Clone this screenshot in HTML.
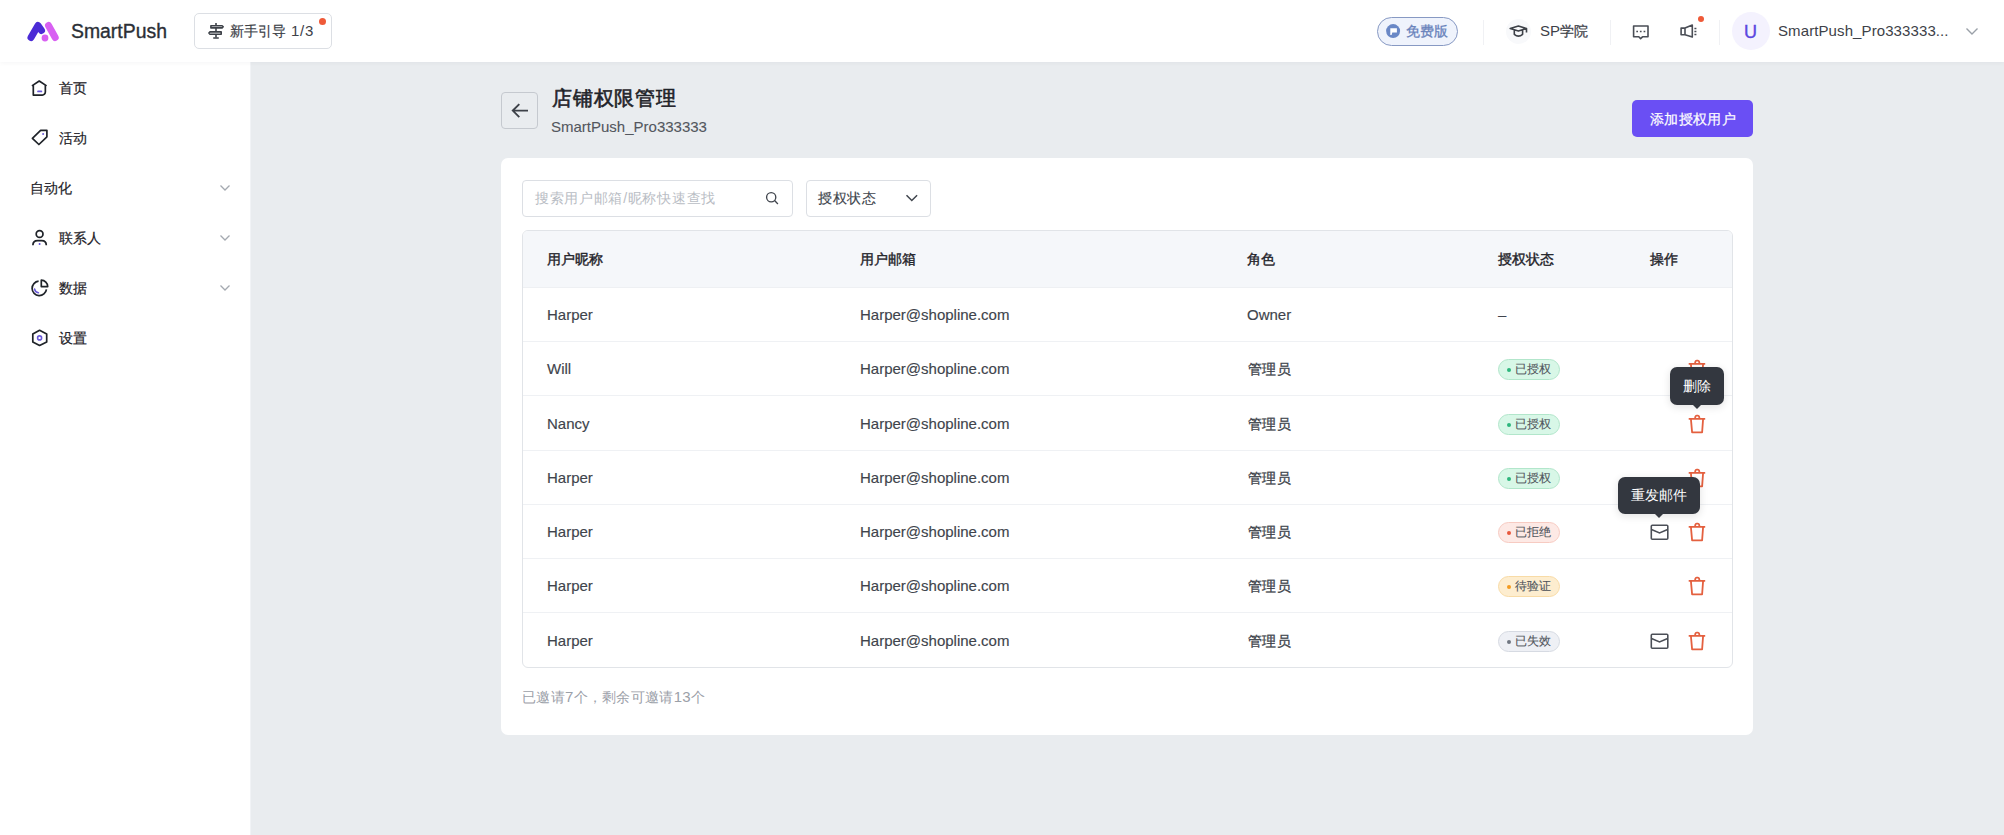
<!DOCTYPE html>
<html><head><meta charset="utf-8">
<style>
*{box-sizing:border-box;margin:0;padding:0}
html,body{width:2004px;height:835px;overflow:hidden}
body{font-family:"Liberation Sans",sans-serif;background:#e9ecef;color:#1f2329;position:relative}
.a{position:absolute;white-space:nowrap}
#hdr{left:0;top:0;width:2004px;height:62px;background:#fff;box-shadow:0 1px 5px rgba(20,30,50,0.045);z-index:2}
#side{left:0;top:62px;width:251px;height:773px;background:#fff;border-right:1px solid #f1f3f6}
.mt{font-size:14px;line-height:20px;color:#1f2329;-webkit-text-stroke:0.2px #1f2329}
.chev{width:12px;height:12px}
#card{left:501px;top:158px;width:1252px;height:577px;background:#fff;border-radius:7px}
#tbl{left:522px;top:230px;width:1211px;height:438px;border:1px solid #e1e4e8;border-radius:6px;overflow:hidden;background:#fff}
.th{position:absolute;top:0;left:0;width:100%;height:57px;background:#f5f7fa;border-bottom:1px solid #eef0f3}
.row{position:absolute;left:0;width:100%;height:54px;border-bottom:1px solid #eff1f4}
.c{position:absolute;white-space:nowrap;font-size:15px;line-height:20px;color:#40444c;-webkit-text-stroke:0.15px #40444c;top:17px}
.hc{position:absolute;white-space:nowrap;font-size:14px;line-height:20px;color:#1f2329;font-weight:400;-webkit-text-stroke:0.38px #1f2329;top:18px}
.cj{font-size:14px;-webkit-text-stroke:0.3px #3a3f47;margin-left:0.5px;letter-spacing:0.5px}
.badge{position:absolute;left:975px;top:17px;width:62px;height:21px;border-radius:11px;border:1px solid;font-size:12px;line-height:19px;padding-left:16px;color:#50555c;-webkit-text-stroke:0.1px #50555c;letter-spacing:0.2px}
.badge i{position:absolute;left:7.5px;top:8px;width:4px;height:4px;border-radius:50%}
.g{background:#d8f7e7;border-color:#b2e6cb}.g i{background:#2eb67d}
.r{background:#fde9e5;border-color:#f7cbc2}.r i{background:#e8583d}
.o{background:#fdedcf;border-color:#f8dba6}.o i{background:#f49a1e}
.x{background:#eef0f5;border-color:#d6dae2}.x i{background:#6f7681}
.ic{position:absolute}
.tip{position:absolute;background:#33373f;color:#fff;border-radius:7px;font-size:14px;line-height:20px;text-align:center;box-shadow:0 2px 8px rgba(0,0,0,0.12)}
.tip:after{content:"";position:absolute;left:50%;bottom:-4px;margin-left:-5px;border-left:5px solid transparent;border-right:5px solid transparent;border-top:5px solid #33373f}
</style></head>
<body>
<div id="hdr" class="a">
  <!-- logo -->
  <svg class="ic" style="left:24px;top:18px" width="40" height="28" viewBox="0 0 40 28">
    <path d="M7 19.5 L14 7.5 L17.5 12.5" fill="none" stroke="#4b2bd6" stroke-width="7" stroke-linecap="round" stroke-linejoin="round"/>
    <path d="M24.5 7.5 L31.2 19.5" fill="none" stroke="#d860f2" stroke-width="7" stroke-linecap="round"/>
    <circle cx="21" cy="20" r="3.4" fill="#d860f2"/>
  </svg>
  <div class="a" style="left:71px;top:19px;font-size:19.4px;line-height:24px;color:#2b2f36;-webkit-text-stroke:0.35px #2b2f36">SmartPush</div>
  <!-- guide -->
  <div class="a" style="left:194px;top:13px;width:138px;height:36px;border:1px solid #dcdfe4;border-radius:5px"></div>
  <svg class="ic" style="left:207px;top:22px" width="18" height="18" viewBox="0 0 18 18">
    <path d="M9 1v2.7M3.9 3.7h11.2l1.1 1.1-1.1 1.1H3.9zM14.2 9.9H3l-1.1 1.15L3 12.2h11.2zM9 5.9v4M9 12.2v3.2" fill="none" stroke="#3d4148" stroke-width="1.6" stroke-linejoin="round"/><path d="M6.8 16h4.4" stroke="#3d4148" stroke-width="1.6" stroke-linecap="round"/>
  </svg>
  <div class="a" style="left:230px;top:21px;font-size:14px;line-height:20px;color:#3d4148;-webkit-text-stroke:0.2px #3d4148">新手引导<span style="font-size:15px;letter-spacing:0.8px;-webkit-text-stroke:0"> 1/3</span></div>
  <div class="a" style="left:319px;top:18px;width:7px;height:7px;border-radius:50%;background:#ef5a38"></div>

  <!-- free badge -->
  <div class="a" style="left:1377px;top:17px;width:81px;height:29px;border:1px solid #8799c3;border-radius:15px;background:#eff3fc"></div>
  <svg class="ic" style="left:1386px;top:24px" width="15" height="15" viewBox="0 0 15 15"><circle cx="7.1" cy="7.1" r="7" fill="#6a88c6"/><path d="M4.3 4.3H10.9V8.5H6.3L5.6 10.9H4.3Z" fill="#fff"/></svg>
  <div class="a" style="left:1406px;top:21px;font-size:14px;line-height:20px;color:#6882bb;-webkit-text-stroke:0.3px #6882bb">免费版</div>
  <div class="a" style="left:1483px;top:20px;width:1px;height:25px;background:#f0f1f4"></div>
  <div class="a" style="left:1506px;top:19px;width:25px;height:25px;border-radius:50%;background:#f8f9fb"></div>
  <svg class="ic" style="left:1508px;top:23px" width="21" height="17" viewBox="0 0 21 17"><path d="M2.2 5.5L10.4 3L18.5 5.5L10.4 8.1Z M18.5 5.5V9.6 M6.3 7.1V11.3C8.8 13.5 12.1 13.5 14.6 11.3V7.1" fill="none" stroke="#3d4148" stroke-width="1.6" stroke-linejoin="round"/></svg>
  <div class="a" style="left:1540px;top:21px;font-size:15px;line-height:20px;color:#3d4148">SP<span style="font-size:14px;-webkit-text-stroke:0.25px #3d4148">学院</span></div>
  <div class="a" style="left:1610px;top:20px;width:1px;height:25px;background:#f0f1f4"></div>
  <svg class="ic" style="left:1632px;top:24px" width="18" height="16" viewBox="0 0 18 16"><path d="M1.6 2H16V12.8H10.5L8.6 14.6L6.8 12.8H1.6Z" fill="none" stroke="#4a4e56" stroke-width="1.6" stroke-linejoin="round"/><path d="M4.3 7.45h1.7M7.9 7.45h1.7M11.6 7.45h1.7" stroke="#4a4e56" stroke-width="1.6"/></svg>
  <svg class="ic" style="left:1679px;top:23px" width="20" height="17" viewBox="0 0 20 17"><path d="M2.1 5.1H6V11.8H2.1Z M6 5.1L13.3 2V14.1L6 11.8" fill="none" stroke="#4a4e56" stroke-width="1.6" stroke-linejoin="round"/><path d="M15.4 5.5h2M15.4 8.5h2M15.4 11.6h2" stroke="#4a4e56" stroke-width="1.5"/></svg>
  <div class="a" style="left:1698px;top:15.6px;width:6.2px;height:6.2px;border-radius:50%;background:#ef5a38"></div>
  <div class="a" style="left:1719px;top:20px;width:1px;height:25px;background:#f0f1f4"></div>
  <div class="a" style="left:1732px;top:12px;width:38px;height:38px;border-radius:50%;background:#f4f2fe"></div>
  <div class="a" style="left:1744px;top:22px;font-size:18px;line-height:20px;color:#5b47e0;-webkit-text-stroke:0.4px #5b47e0">U</div>
  <div class="a" style="left:1778px;top:21px;font-size:15px;line-height:20px;color:#3d4148;letter-spacing:0.1px">SmartPush_Pro333333...</div>
  <svg class="ic" style="left:1965px;top:26px" width="14" height="10" viewBox="0 0 14 10">
    <path d="M1.5 2.5l5.5 5.5 5.5-5.5" fill="none" stroke="#9aa0a8" stroke-width="1.4"/>
  </svg>
</div>

<div id="side" class="a">
  <svg class="ic" style="left:30px;top:17px" width="19" height="19" viewBox="0 0 19 19">
    <path d="M1.9 6.9L9.25 2L16.6 6.9M3.3 5.9V16.05H12.35A3 3 0 0 0 15.35 13.05V5.9" fill="none" stroke="#1f2329" stroke-width="1.7" stroke-linejoin="round"/>
    <path d="M8 12.45H11.4" stroke="#6a5ad8" stroke-width="1.7" stroke-linecap="round"/>
  </svg>
  <div class="a mt" style="left:59px;top:16px">首页</div>
  <svg class="ic" style="left:30px;top:66px" width="19" height="19" viewBox="0 0 19 19">
    <path d="M10.6 2.3H16.9V8.8L8.9 16.5L2.4 10.3Z" fill="none" stroke="#1f2329" stroke-width="1.7" stroke-linejoin="round"/>
    <circle cx="13.1" cy="6.1" r="1" fill="#6a5ad8"/>
  </svg>
  <div class="a mt" style="left:59px;top:66px">活动</div>
  <div class="a mt" style="left:30px;top:116px">自动化</div>
  <svg class="ic chev" style="left:219px;top:120px" viewBox="0 0 12 12"><path d="M1.5 3.5l4.5 4.5 4.5-4.5" fill="none" stroke="#a4a9b0" stroke-width="1.3"/></svg>
  <svg class="ic" style="left:30px;top:166px" width="19" height="19" viewBox="0 0 19 19">
    <circle cx="9.6" cy="6.07" r="3.4" fill="none" stroke="#1f2329" stroke-width="1.7"/>
    <path d="M2.9 17.3C2.9 14.2 4.5 12.6 7.5 12.6H11.7C14.7 12.6 16.3 14.2 16.3 17.3" fill="none" stroke="#1f2329" stroke-width="1.7"/>
    <path d="M9.6 15V17" stroke="#6a5ad8" stroke-width="1.6"/>
  </svg>
  <div class="a mt" style="left:59px;top:166px">联系人</div>
  <svg class="ic chev" style="left:219px;top:170px" viewBox="0 0 12 12"><path d="M1.5 3.5l4.5 4.5 4.5-4.5" fill="none" stroke="#a4a9b0" stroke-width="1.3"/></svg>
  <svg class="ic" style="left:30px;top:216px" width="19" height="19" viewBox="0 0 19 19">
    <path d="M8.6 3.2A7.2 7.2 0 1 0 16.45 11.3" fill="none" stroke="#1f2329" stroke-width="1.7"/>
    <path d="M11.3 8.6V2.2A6.4 6.4 0 0 1 17.7 8.6Z" fill="none" stroke="#1f2329" stroke-width="1.7" stroke-linejoin="round"/>
    <path d="M4.6 11.1A4.7 4.7 0 0 0 8.4 14.8" fill="none" stroke="#6a5ad8" stroke-width="1.6" stroke-linecap="round"/>
  </svg>
  <div class="a mt" style="left:59px;top:216px">数据</div>
  <svg class="ic chev" style="left:219px;top:220px" viewBox="0 0 12 12"><path d="M1.5 3.5l4.5 4.5 4.5-4.5" fill="none" stroke="#a4a9b0" stroke-width="1.3"/></svg>
  <svg class="ic" style="left:30px;top:266px" width="19" height="19" viewBox="0 0 19 19">
    <path d="M9.6 2.3L16.7 6.1V14L9.6 17.5L2.8 14V6.1Z" fill="none" stroke="#1f2329" stroke-width="1.7" stroke-linejoin="round"/>
    <circle cx="9.6" cy="9.9" r="2" fill="none" stroke="#6a5ad8" stroke-width="1.6"/>
  </svg>
  <div class="a mt" style="left:59px;top:266px">设置</div>
</div>

<!-- page header -->
<div class="a" style="left:501px;top:92px;width:37px;height:37px;border:1px solid #c5c9cf;border-radius:4px"></div>
<svg class="ic" style="left:510px;top:101px" width="19" height="19" viewBox="0 0 19 19">
  <path d="M18 9.6H3M9.3 3.1L2.8 9.6 9.3 16.1" fill="none" stroke="#3d4148" stroke-width="1.9"/>
</svg>
<div class="a" style="left:552px;top:86px;font-size:20px;line-height:24px;font-weight:400;-webkit-text-stroke:0.6px #1f2329;letter-spacing:0.8px;color:#1f2329">店铺权限管理</div>
<div class="a" style="left:551px;top:117px;font-size:15px;line-height:20px;color:#53575e;-webkit-text-stroke:0.1px #53575e">SmartPush_Pro333333</div>
<div class="a" style="left:1632px;top:100px;width:121px;height:37px;border-radius:5px;background:#6a4ff4;color:#fff;font-size:14px;line-height:38px;padding-left:1px;letter-spacing:0.4px;text-align:center;-webkit-text-stroke:0.2px #fff">添加授权用户</div>

<div id="card" class="a"></div>
<!-- search -->
<div class="a" style="left:522px;top:180px;width:271px;height:37px;border:1px solid #dcdfe4;border-radius:4px"></div>
<div class="a" style="left:535px;top:188px;font-size:14px;line-height:20px;color:#b9bdc4;letter-spacing:0.7px">搜索用户邮箱/昵称快速查找</div>
<svg class="ic" style="left:764px;top:190px" width="16" height="16" viewBox="0 0 16 16">
  <circle cx="7.2" cy="7.2" r="4.6" fill="none" stroke="#40454d" stroke-width="1.35"/>
  <path d="M10.6 10.6l3.3 3.3" stroke="#40454d" stroke-width="1.35"/>
</svg>
<div class="a" style="left:806px;top:180px;width:125px;height:37px;border:1px solid #dcdfe4;border-radius:4px"></div>
<div class="a" style="left:818px;top:188px;font-size:14px;line-height:20px;color:#40454d;-webkit-text-stroke:0.15px #40454d;letter-spacing:0.5px">授权状态</div>
<svg class="ic" style="left:904px;top:192px" width="15" height="12" viewBox="0 0 15 12">
  <path d="M2.5 3.2l5.3 5.3 5.3-5.3" fill="none" stroke="#40454d" stroke-width="1.5"/>
</svg>

<div id="tbl" class="a">
  <div class="th">
    <div class="hc" style="left:24px">用户昵称</div>
    <div class="hc" style="left:337px">用户邮箱</div>
    <div class="hc" style="left:724px">角色</div>
    <div class="hc" style="left:975px">授权状态</div>
    <div class="hc" style="left:1127px">操作</div>
  </div>
  <div class="row" style="top:57.00px"><div class="c" style="left:24px">Harper</div><div class="c" style="left:337px">Harper@shopline.com</div><div class="c" style="left:724px">Owner</div><div class="c" style="left:975px">–</div></div>
  <div class="row" style="top:111.27px"><div class="c" style="left:24px">Will</div><div class="c" style="left:337px">Harper@shopline.com</div><div class="c cj" style="left:724px">管理员</div><div class="badge g"><i></i>已授权</div><svg class="ic" style="left:1165px;top:17px" width="19" height="21" viewBox="0 0 19 21"><use href="#trash"/></svg></div>
  <div class="row" style="top:165.54px"><div class="c" style="left:24px">Nancy</div><div class="c" style="left:337px">Harper@shopline.com</div><div class="c cj" style="left:724px">管理员</div><div class="badge g"><i></i>已授权</div><svg class="ic" style="left:1165px;top:17px" width="19" height="21" viewBox="0 0 19 21"><use href="#trash"/></svg></div>
  <div class="row" style="top:219.81px"><div class="c" style="left:24px">Harper</div><div class="c" style="left:337px">Harper@shopline.com</div><div class="c cj" style="left:724px">管理员</div><div class="badge g"><i></i>已授权</div><svg class="ic" style="left:1165px;top:17px" width="19" height="21" viewBox="0 0 19 21"><use href="#trash"/></svg></div>
  <div class="row" style="top:274.08px"><div class="c" style="left:24px">Harper</div><div class="c" style="left:337px">Harper@shopline.com</div><div class="c cj" style="left:724px">管理员</div><div class="badge r"><i></i>已拒绝</div><svg class="ic" style="left:1127px;top:18px" width="20" height="19" viewBox="0 0 20 19"><use href="#mail"/></svg><svg class="ic" style="left:1165px;top:17px" width="19" height="21" viewBox="0 0 19 21"><use href="#trash"/></svg></div>
  <div class="row" style="top:328.35px"><div class="c" style="left:24px">Harper</div><div class="c" style="left:337px">Harper@shopline.com</div><div class="c cj" style="left:724px">管理员</div><div class="badge o"><i></i>待验证</div><svg class="ic" style="left:1165px;top:17px" width="19" height="21" viewBox="0 0 19 21"><use href="#trash"/></svg></div>
  <div class="row" style="top:382.62px;border-bottom:none"><div class="c" style="left:24px">Harper</div><div class="c" style="left:337px">Harper@shopline.com</div><div class="c cj" style="left:724px">管理员</div><div class="badge x"><i></i>已失效</div><svg class="ic" style="left:1127px;top:18px" width="20" height="19" viewBox="0 0 20 19"><use href="#mail"/></svg><svg class="ic" style="left:1165px;top:17px" width="19" height="21" viewBox="0 0 19 21"><use href="#trash"/></svg></div>
</div>
<svg width="0" height="0" style="position:absolute">
  <defs>
    <g id="trash"><path d="M0.7 4.85H17.2M2.9 4.85L4.1 18.45H14.1L15.1 4.85M6.9 4.85L7.4 2.6Q7.7 1.65 8.6 1.65H9.9Q10.8 1.65 11.1 2.6L11.6 4.85" fill="none" stroke="#e4603f" stroke-width="1.8" stroke-linejoin="round"/></g>
    <g id="mail"><rect x="1.3" y="2.18" width="16.5" height="14.1" rx="1" fill="none" stroke="#4b4f57" stroke-width="1.6"/><path d="M1.5 6.5l8.05 3.4 8.05-3.4" fill="none" stroke="#4b4f57" stroke-width="1.6"/></g>
  </defs>
</svg>
<div class="tip" style="left:1670px;top:367px;width:54px;height:38px;padding-top:9px">删除</div>
<div class="tip" style="left:1618px;top:477px;width:82px;height:37px;padding-top:8px">重发邮件</div>
<div class="a" style="left:522px;top:687px;font-size:14px;line-height:20px;color:#9ba0a8;letter-spacing:0.3px">已邀请<span style="font-size:15px">7</span>个，剩余可邀请<span style="font-size:15px">13</span>个</div>
</body></html>
